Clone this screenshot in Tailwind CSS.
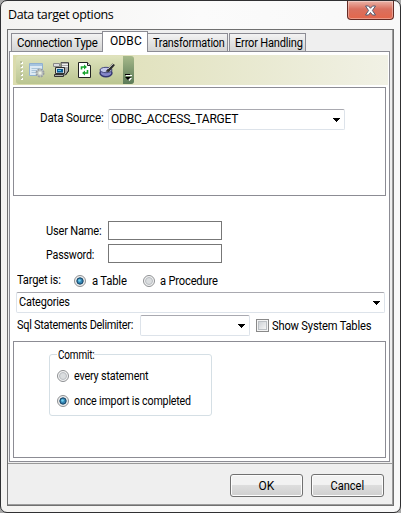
<!DOCTYPE html>
<html lang="en">
<head>
<meta charset="utf-8">
<title>Data target options</title>
<script src="https://cdn.jsdelivr.net/npm/@tailwindcss/browser@4"></script>
</head>
<body class="w-[401px] h-[513px] overflow-hidden bg-[#a8a8a8] font-['Roboto','Liberation_Sans',sans-serif] text-[12px] leading-[14px] text-black whitespace-nowrap">
<div class="w-[401px] h-[513px] border border-[#303032] rounded-[7px] bg-linear-to-r from-[#f4f3f1] via-[#fbfbfb] to-[#f8f8f8] flex flex-col px-[6px] overflow-hidden">
  <header class="h-7 shrink-0 flex justify-between items-start">
    <h1 class="font-['Open_Sans',sans-serif] text-[12.5px] leading-[16px] mt-[6px] ml-px tracking-[-0.38px]">Data target options</h1>
    <button aria-label="Close" class="w-[47px] h-[19px] rounded-b-[4px] border border-t-0 border-[#642b25] bg-linear-to-b from-[#eab3a7] from-0% via-[#d9705f] via-45% to-[#e4664b] flex items-center justify-center shadow-[inset_0_0_0_1px_#ffffff55]">
      <svg width="13" height="11" viewBox="0 0 13 11"><path d="M1.500 1h3l2 2.300 2-2.300h3L8.400 5.500 11.500 10h-3l-2-2.500-2 2.500h-3l3.100-4.500z" fill="#fff" stroke="#555b70"/></svg>
    </button>
  </header>
  <main class="w-[387px] h-[477px] shrink-0 border border-[#707070] bg-[#efefef] flex flex-col shadow-[inset_-1px_-1px_0_#9c9c9c]">
    <nav class="h-[21px] pl-[3px] flex items-end shrink-0">
      <div class="w-[92px] h-[18px] border border-b-0 border-[#8c8c94] bg-linear-to-b from-[#f3f3f3] to-[#d4d4d4] pl-[5px] pt-[2px]"><span class="inline-block origin-left scale-x-[.95] tracking-[-0.3px]">Connection Type</span></div>
      <div class="w-[46px] h-[21px] -ml-px -mb-px border border-b-0 border-[#8c8c94] bg-white pl-[7px] pt-[2px] relative"><span class="tracking-[0.1px]">ODBC</span></div>
      <div class="w-[80px] h-[18px] border border-b-0 border-l-0 border-[#8c8c94] bg-linear-to-b from-[#f3f3f3] to-[#d4d4d4] pl-[5px] pt-[2px]"><span class="inline-block origin-left scale-x-[.9] tracking-[-0.2px]">Transformation</span></div>
      <div class="w-[77px] h-[18px] ml-px border border-b-0 border-[#8c8c94] bg-linear-to-b from-[#f3f3f3] to-[#d4d4d4] pl-[5px] pt-[2px]"><span class="inline-block origin-left scale-x-[.92] tracking-[-0.2px]">Error Handling</span></div>
    </nav>
    <section class="ml-px w-[381px] h-[411px] border border-[#8c8c94] bg-white pl-[3px] pt-[3px] flex flex-col shrink-0">
      <div class="h-[30px] w-[375px] bg-linear-to-r from-[#dadbac] to-[#f1f1e5] pl-[3px] pt-px shrink-0">
        <div class="w-[118px] h-[28px] rounded-[3px] bg-linear-to-b from-[#dfe3bd] to-[#bac590] flex items-center relative">
          <svg width="3" height="20" class="ml-[4px]" viewBox="0 0 3 20" shape-rendering="crispEdges"><path d="M1 2h2v2H1zM1 6h2v2H1zM1 10h2v2H1zM1 14h2v2H1zM1 18h2v2H1z" fill="#fff"/><path d="M0 1h2v2H0zM0 5h2v2H0zM0 9h2v2H0zM0 13h2v2H0zM0 17h2v2H0z" fill="#b9bf9c"/></svg>
          <svg width="16" height="16" class="ml-[6px]" viewBox="0 0 16 16"><path d="M.5 1.500h13v12H.5z" fill="#dce9f3" stroke="#8fb0d0"/><path d="M1 2h12v2H1z" fill="#a5c4e0"/><path d="M2.500 6.500h9M2.500 8.500h7M2.500 10.500h5" stroke="#aac4d9"/><circle cx="11" cy="11" r="3.600" fill="#c6cbc7" stroke="#989da0" stroke-width="1.800" stroke-dasharray="1.900 .93"/><circle cx="11" cy="11" r="1.500" fill="#edf1df"/></svg>
          <svg width="17" height="16" class="ml-[8px]" viewBox="0 0 17 16"><path d="M.5 1.500h6v3h-6z" fill="#ddd" stroke="#888"/><path d="M8 .5h7.500v8.500l-3 4H8z" fill="#aaa" stroke="#555"/><path d="M9 2.500h6M9 4.500h6" stroke="#eee"/><path d="M15.500 1v8l-3 4" fill="none" stroke="#222"/><path d="M2.500 5.500h9v6h-9z" fill="#d8dadd" stroke="#303030"/><path d="M4 7h6v3.500H4z" fill="#075b91"/><path d="M5 8h3v1H5z" fill="#4cc1ee"/><path d="M1.500 12.500h9v2h-9z" fill="#aaa" stroke="#333"/></svg>
          <svg width="14" height="16" class="ml-[8px]" viewBox="0 0 14 16"><path d="M.5.5h9l3 3v12H.5z" fill="#fff" stroke="#222"/><path d="M9.500.5v3h3" fill="#ddd" stroke="#222"/><path d="M3.500 7.500V5H6M9.500 8v3H7" fill="none" stroke="#18a52f" stroke-width="1.600"/><path d="M6 2.500L9 5 6 7.500zM7 8.500L4 11l3 2.500z" fill="#18a52f"/></svg>
          <svg width="17" height="16" class="ml-[7px]" viewBox="0 0 17 16"><ellipse cx="7" cy="11" rx="6" ry="3.700" fill="#8586c9" stroke="#34366f" stroke-width="1.400"/><ellipse cx="7" cy="8" rx="6" ry="2.700" fill="#c4c8ec" stroke="#44477c"/><path d="M6.500 9.500L13.500 1.500 16 3 10 10z" fill="#303030"/><path d="M9 7l5-5" stroke="#bbb"/></svg>
          <div class="absolute right-0 top-0 w-[11px] h-[28px] rounded-r-[3px] bg-linear-to-b from-[#a6b98a] to-[#5c7b58] flex items-end justify-center pb-[3px]"><svg width="7" height="7" viewBox="0 0 7 7"><path d="M1 1h6v1H1zM2 4h5L4.500 7z" fill="#fff"/><path d="M0 0h5v1H0zM0 3h6L3 6z" fill="#000"/></svg></div>
        </div>
      </div>
      <div class="mt-[2px] w-[373px] h-[109px] border border-[#8c8c94] shrink-0 flex items-start pt-[21px] pl-[26px]">
        <label class="w-[68px] mt-[2px]"><span class="inline-block origin-left scale-x-[.97] tracking-[-0.2px]">Data Source:</span></label>
        <div class="w-[237px] h-[21px] border border-[#dde3ea] border-t-[#a9a9b0] rounded-[2px] flex justify-between pl-[2px] pr-[4px] pt-[2px]"><span class="tracking-[-0.2px]">ODBC_ACCESS_TARGET</span><svg class="mt-[6px]" width="7" height="4" viewBox="0 0 7 4" shape-rendering="crispEdges"><path d="M0 0h7v1H6v1H5v1H4v1H3V3H2V2H1V1H0z"/></svg></div>
      </div>
      <div class="mt-[25px] pl-[33px] h-[20px] shrink-0 flex"><label class="w-[62px] mt-[3px]"><span class="inline-block origin-left scale-x-[.92] tracking-[-0.2px]">User Name:</span></label><div class="w-[114px] h-[19px] border border-[#777]"></div></div>
      <div class="mt-[3px] pl-[33px] h-[19px] shrink-0 flex"><label class="w-[62px] mt-[4px]"><span class="inline-block origin-left scale-x-[.89] tracking-[-0.2px]">Password:</span></label><div class="w-[114px] h-[19px] border border-[#777]"></div></div>
      <div class="h-[29px] pl-[4px] shrink-0 flex pt-[9px]">
        <span class="w-[57px] mt-px"><span class="inline-block origin-left scale-x-[.93] tracking-[-0.2px]">Target is:</span></span>
        <svg width="12" height="12" class="mt-[3px]" viewBox="0 0 12 12"><circle cx="6" cy="6" r="5.500" fill="#eee" stroke="#8d8f92"/><circle cx="6" cy="6" r="3.200" fill="#3484b3" stroke="#123f61"/><circle cx="5.500" cy="5.500" r="1.300" fill="#72d4f2"/></svg>
        <span class="ml-[6px] mt-[2px] w-[51px]"><span class="inline-block origin-left scale-x-[.94] tracking-[-0.2px]">a Table</span></span>
        <svg width="12" height="12" class="mt-[3px]" viewBox="0 0 12 12"><circle cx="6" cy="6" r="5.500" fill="#f4f4f4" stroke="#8d8f92"/><circle cx="6" cy="6" r="3.500" fill="#dadddf" stroke="#b8bcc0"/></svg>
        <span class="ml-[5px] mt-[2px]"><span class="inline-block origin-left scale-x-[.93] tracking-[-0.2px]">a Procedure</span></span>
      </div>
      <div class="ml-[3px] w-[369px] h-[21px] shrink-0 border border-[#dde3ea] border-t-[#a9a9b0] rounded-[2px] flex justify-between pl-[2px] pr-[4px] pt-[2px]"><span class="inline-block origin-left scale-x-[.91] tracking-[-0.2px]">Categories</span><svg class="mt-[6px]" width="7" height="4" viewBox="0 0 7 4" shape-rendering="crispEdges"><path d="M0 0h7v1H6v1H5v1H4v1H3V3H2V2H1V1H0z"/></svg></div>
      <div class="mt-[2px] h-[21px] pl-[4px] shrink-0 flex">
        <label class="w-[123px] mt-[3px]"><span class="inline-block origin-left scale-x-[.91] tracking-[-0.3px]">Sql Statements Delimiter:</span></label>
        <div class="w-[110px] h-[21px] border border-[#dde3ea] border-t-[#a9a9b0] rounded-[2px] flex justify-end pr-[4px] pt-[8px]"><svg width="7" height="4" viewBox="0 0 7 4" shape-rendering="crispEdges"><path d="M0 0h7v1H6v1H5v1H4v1H3V3H2V2H1V1H0z"/></svg></div>
        <div class="ml-[6px] mt-[4px] w-[13px] h-[13px] border border-[#898989] bg-[#f4f4f4] p-px"><div class="w-full h-full border border-[#bcc0c4] bg-linear-to-br from-[#cfd3d7] to-[#f5f5f5]"></div></div>
        <span class="ml-[3px] mt-[4px]"><span class="inline-block origin-left scale-x-[.93] tracking-[-0.2px]">Show System Tables</span></span>
      </div>
      <div class="mt-[5px] w-[373px] h-[117px] border border-[#8c8c94] shrink-0 pt-[12px] pl-[35px]">
        <div class="w-[163px] h-[62px] border border-[#d5dfe5] rounded-[3px] pl-[7px]">
          <div class="-mt-[7px] w-[37px] h-[14px] bg-white pl-px"><span class="inline-block origin-left scale-x-[.83] tracking-[-0.2px]">Commit:</span></div>
          <div class="mt-[7px] flex items-center"><svg width="12" height="12" viewBox="0 0 12 12"><circle cx="6" cy="6" r="5.500" fill="#f4f4f4" stroke="#8d8f92"/><circle cx="6" cy="6" r="3.500" fill="#dadddf" stroke="#b8bcc0"/></svg><span class="ml-[5px] inline-block origin-left scale-x-[.9] tracking-[-0.2px]">every statement</span></div>
          <div class="mt-[11px] flex items-center"><svg width="12" height="12" viewBox="0 0 12 12"><circle cx="6" cy="6" r="5.500" fill="#eee" stroke="#8d8f92"/><circle cx="6" cy="6" r="3.200" fill="#3484b3" stroke="#123f61"/><circle cx="5.500" cy="5.500" r="1.300" fill="#72d4f2"/></svg><span class="ml-[5px] inline-block origin-left scale-x-[.89] tracking-[-0.2px]">once import is completed</span></div>
        </div>
      </div>
    </section>
    <footer class="mt-px flex-1 border-t border-[#999] flex justify-end gap-[8px] pt-[10px] pr-[9px]">
      <button class="w-[73px] h-[23px] rounded-[3px] border border-[#707070] bg-linear-to-b from-[#f2f2f2] from-45% via-[#dddddd] via-50% to-[#cfcfcf] shadow-[inset_0_0_0_1px_#fcfcfc]">OK</button>
      <button class="w-[73px] h-[23px] rounded-[3px] border border-[#707070] bg-linear-to-b from-[#f2f2f2] from-45% via-[#dddddd] via-50% to-[#cfcfcf] shadow-[inset_0_0_0_1px_#fcfcfc]"><span class="inline-block scale-x-[.92]">Cancel</span></button>
    </footer>
  </main>
</div>
</body>
</html>
